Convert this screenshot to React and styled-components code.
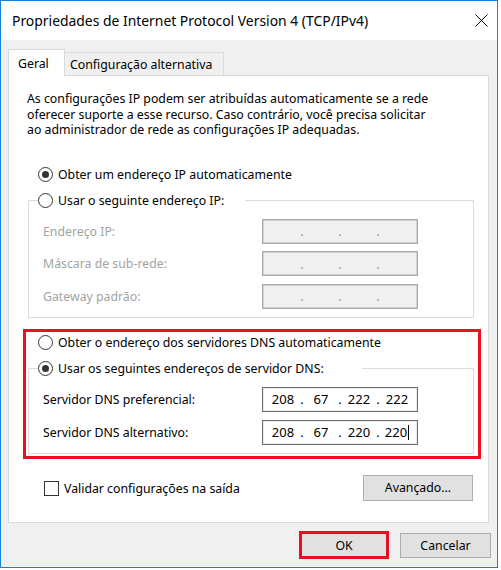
import React from 'react';
import styled, { createGlobalStyle } from 'styled-components';

const Global = createGlobalStyle`
  html, body { margin: 0; padding: 0; background: #ffffff; }
  body {
    font-family: "Noto Sans", "Open Sans", sans-serif;
    font-size: 12.3px;
    color: #000;
  }
  * { box-sizing: border-box; }
`;

const Window = styled.div`
  width: 498px;
  height: 568px;
  border: 1px solid #1a7fd6;
  background: #f0f0f0;
  display: flex;
  flex-direction: column;
`;

const TitleBar = styled.div`
  height: 39px;
  flex: none;
  background: #ffffff;
  display: flex;
  align-items: center;
  justify-content: space-between;
  padding: 0 9px 0 11px;
`;

const Title = styled.div`
  font-size: 13.9px;
  line-height: 18px;
  color: #000;
`;

const CloseBtn = styled.svg`
  width: 13px;
  height: 13px;
  display: block;
`;

const Body = styled.div`
  flex: 1;
  display: flex;
  flex-direction: column;
  padding: 9px 8px 0 7px;
`;

const Tabs = styled.div`
  display: flex;
  align-items: flex-end;
  height: 27px;
  margin-bottom: -1px;
  position: relative;
  z-index: 1;
`;

const Tab = styled.div`
  height: ${p => (p.$active ? '27px' : '23px')};
  margin-bottom: ${p => (p.$active ? '0' : '1px')};
  width: ${p => p.$w}px;
  background: ${p => (p.$active ? '#ffffff' : '#f0f0f0')};
  border: 1px solid #d9d9d9;
  border-bottom: none;
  border-left: ${p => (p.$active ? '1px solid #d9d9d9' : 'none')};
  display: flex;
  align-items: center;
  padding-left: ${p => (p.$active ? '9px' : '5px')};
  padding-top: ${p => (p.$active ? '0' : '1px')};
`;

const Panel = styled.div`
  width: 481px;
  height: 448px;
  flex: none;
  background: #ffffff;
  border: 1px solid #d9d9d9;
  display: flex;
  flex-direction: column;
  align-items: flex-start;
`;

const Para = styled.p`
  margin: 15px 0 0 18px;
  line-height: 15.5px;
  white-space: nowrap;
`;

const RadioRow = styled.label`
  display: flex;
  align-items: center;
  height: 16px;
  gap: 5px;
  margin: ${p => p.$m || '0'};
  color: #000;
  white-space: nowrap;
`;

const RadioCircle = styled.span`
  width: 15px;
  height: 15px;
  border-radius: 50%;
  border: 1px solid #333333;
  background: #ffffff;
  display: flex;
  align-items: center;
  justify-content: center;
  flex: none;
  &::after {
    content: '';
    width: 7px;
    height: 7px;
    border-radius: 50%;
    background: ${p => (p.$checked ? '#333333' : 'transparent')};
  }
`;

const Group = styled.fieldset`
  margin: ${p => p.$m || '0'};
  padding: 0;
  width: 446px;
  border: 1px solid #dcdcdc;
  min-inline-size: auto;
`;

const Legend = styled.legend`
  margin-left: 9px;
  padding: 0;
  width: ${p => p.$w}px;
`;

const Rows = styled.div`
  display: grid;
  grid-template-columns: 1fr 156px;
  row-gap: ${p => p.$gap}px;
  align-items: center;
  padding: ${p => p.$pt}px 55px ${p => p.$pb}px 14px;
`;

const FieldLabel = styled.span`
  color: ${p => (p.$disabled ? '#a3a3a3' : '#000')};
`;

const IpBox = styled.div`
  width: 156px;
  height: 25px;
  border: 1px solid ${p => (p.$disabled ? '#a9a9a9' : '#6e6e6e')};
  box-shadow: inset 0 0 0 1px ${p => (p.$disabled ? '#d2d2d2' : 'rgba(0,0,0,0.08)')};
  background: ${p => (p.$disabled ? '#f0f0f0' : '#ffffff')};
  display: flex;
  align-items: center;
  padding: 0 3px 0 3px;
  color: ${p => (p.$disabled ? '#8e8b9c' : '#000')};
  font-size: 13px;
`;

const Octet = styled.span`
  width: 34px;
  text-align: center;
  white-space: nowrap;
`;

const Dot = styled.span`
  width: 4px;
  text-align: center;
`;

const Caret = styled.span`
  display: inline-block;
  width: 1px;
  height: 15px;
  background: #000;
  vertical-align: -3px;
  margin-left: 1px;
`;

const Highlight = styled.div`
  margin: 11px 0 0 14px;
  width: 458px;
  border: 3px solid #e81123;
  padding: 3px 0 2px 2px;
  display: flex;
  flex-direction: column;
`;

const BottomRow = styled.div`
  margin-top: 16px;
  width: 429px;
  margin-left: 35px;
  display: flex;
  align-items: center;
  justify-content: space-between;
`;

const CheckRow = styled.label`
  display: flex;
  align-items: center;
  gap: 5px;
  padding-top: 2px;
`;

const CheckBox = styled.span`
  width: 15px;
  height: 15px;
  border: 1px solid #333333;
  background: #fff;
  flex: none;
`;

const Button = styled.button`
  font-family: inherit;
  font-size: 12.3px;
  color: #000;
  width: ${p => p.$w}px;
  height: ${p => p.$h || 25}px;
  background: #e1e1e1;
  border: ${p => (p.$marked ? '3px solid #e81123' : '1px solid #adadad')};
  padding: 0;
  display: flex;
  align-items: center;
  justify-content: center;
`;

const Footer = styled.div`
  flex: 1;
  display: flex;
  align-items: center;
  justify-content: flex-end;
  gap: 11px;
  margin-right: -8px;
  padding-right: 6px;
`;

function Radio({ checked, children, m }) {
  return (
    <RadioRow $m={m}>
      <RadioCircle $checked={checked} />
      <span>{children}</span>
    </RadioRow>
  );
}

function IpField({ value, disabled, caret }) {
  const parts = value || ['', '', '', ''];
  return (
    <IpBox $disabled={disabled}>
      {parts.map((p, i) => (
        <React.Fragment key={i}>
          {i > 0 && <Dot>.</Dot>}
          <Octet>
            {p}
            {caret && i === 3 && <Caret />}
          </Octet>
        </React.Fragment>
      ))}
    </IpBox>
  );
}

export default function App() {
  return (
    <>
      <Global />
      <Window>
        <TitleBar>
          <Title>Propriedades de Internet Protocol Version 4 (TCP/IPv4)</Title>
          <CloseBtn viewBox="0 0 13 13">
            <path d="M0.5 0.5 L12.5 12.5 M12.5 0.5 L0.5 12.5" stroke="#000" strokeWidth="1" fill="none" />
          </CloseBtn>
        </TitleBar>
        <Body>
          <Tabs>
            <Tab $active $w={57}>Geral</Tab>
            <Tab $w={159}>Configuração alternativa</Tab>
          </Tabs>
          <Panel>
            <Para>
              As configurações IP podem ser atribuídas automaticamente se a rede
              <br />
              oferecer suporte a esse recurso. Caso contrário, você precisa solicitar
              <br />
              ao administrador de rede as configurações IP adequadas.
            </Para>
            <Radio checked m="29px 0 0 29px">Obter um endereço IP automaticamente</Radio>
            <Group $m="10px 0 0 19px">
              <Legend $w={207}>
                <Radio>Usar o seguinte endereço IP:</Radio>
              </Legend>
              <Rows $gap={7.5} $pt={10} $pb={8}>
                <FieldLabel $disabled>Endereço IP:</FieldLabel>
                <IpField disabled />
                <FieldLabel $disabled>Máscara de sub-rede:</FieldLabel>
                <IpField disabled />
                <FieldLabel $disabled>Gateway padrão:</FieldLabel>
                <IpField disabled />
              </Rows>
            </Group>
            <Highlight>
              <Radio m="0 0 0 10px">Obter o endereço dos servidores DNS automaticamente</Radio>
              <Group $m="10px 0 0 0">
                <Legend $w={324}>
                  <Radio checked>Usar os seguintes endereços de servidor DNS:</Radio>
                </Legend>
                <Rows $gap={8} $pt={10} $pb={8}>
                  <FieldLabel>Servidor DNS preferencial:</FieldLabel>
                  <IpField value={['208', '67', '222', '222']} />
                  <FieldLabel>Servidor DNS alternativo:</FieldLabel>
                  <IpField value={['208', '67', '220', '220']} caret />
                </Rows>
              </Group>
            </Highlight>
            <BottomRow>
              <CheckRow>
                <CheckBox />
                <span>Validar configurações na saída</span>
              </CheckRow>
              <Button $w={110} $h={26}>Avançado...</Button>
            </BottomRow>
          </Panel>
          <Footer>
            <Button $marked $w={90} $h={28}>OK</Button>
            <Button $w={91} $h={25}>Cancelar</Button>
          </Footer>
        </Body>
      </Window>
    </>
  );
}
